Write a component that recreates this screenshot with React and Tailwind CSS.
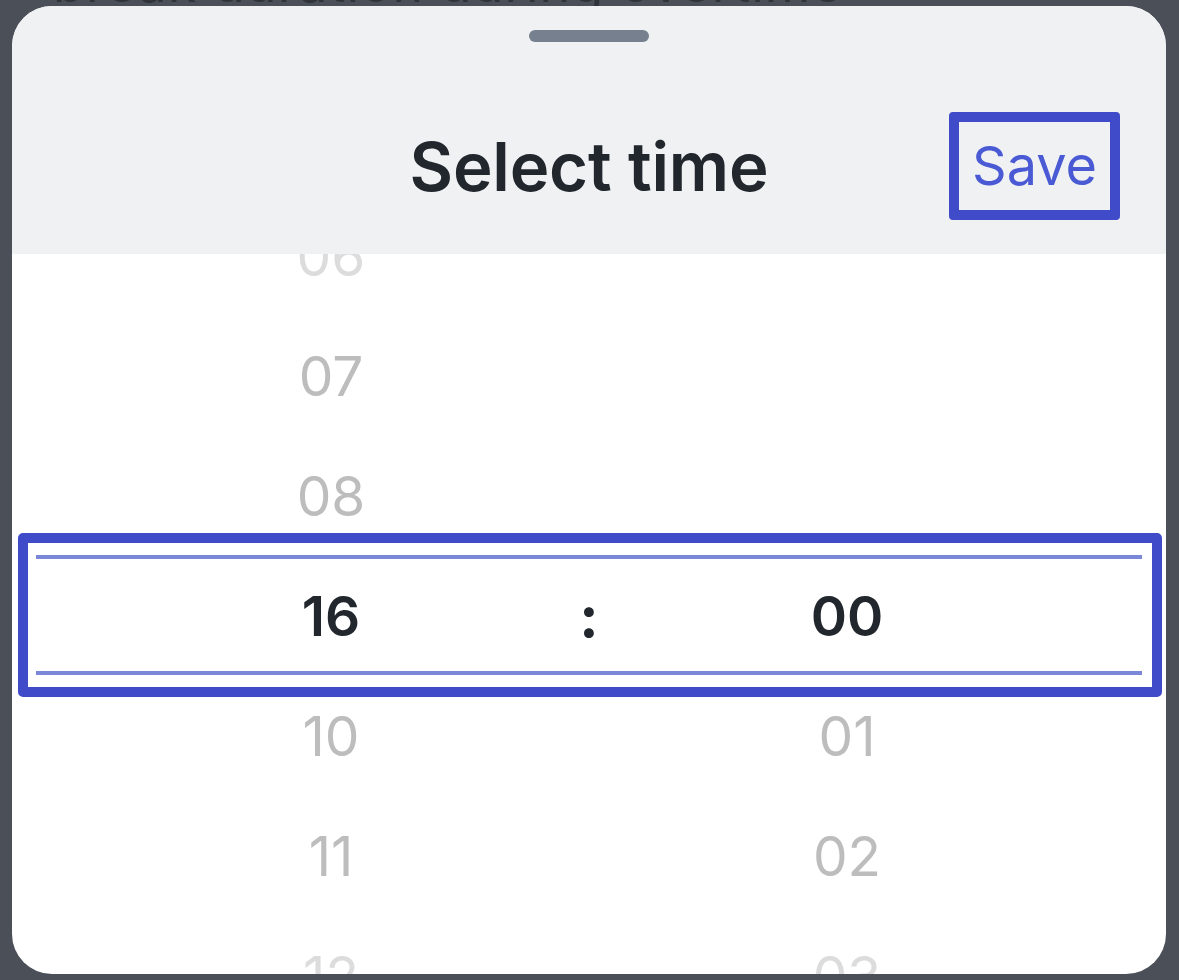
export default function App() {
  const font = { fontFamily: 'Inter, "Noto Sans", sans-serif' };
  const hours = [
    { t: "06", c: "text-[#dcdcdc]" },
    { t: "07", c: "text-[#bdbdbd]" },
    { t: "08", c: "text-[#bdbdbd]" },
    { t: "16", c: "text-[#22272e] font-semibold" },
    { t: "10", c: "text-[#bdbdbd]" },
    { t: "11", c: "text-[#bdbdbd]" },
    { t: "12", c: "text-[#dcdcdc]" },
  ];
  const minutes = [
    { t: "", c: "" },
    { t: "", c: "" },
    { t: "", c: "" },
    { t: "00", c: "text-[#22272e] font-semibold" },
    { t: "01", c: "text-[#bdbdbd]" },
    { t: "02", c: "text-[#bdbdbd]" },
    { t: "03", c: "text-[#dcdcdc]" },
  ];
  return (
    <div className="relative h-[980px] w-[1179px] overflow-hidden bg-[#4b5058]" style={font}>
      <div className="absolute left-[53px] top-[-46px] text-[52px] leading-[60px] text-[#30343a] tracking-[0.02em]">
        break duration during overtime
      </div>
      <div className="relative ml-[12px] mt-[6px] flex h-[968px] w-[1154px] flex-col overflow-hidden rounded-[40px] bg-white">
        <div className="flex h-[248px] shrink-0 flex-col items-center bg-[#f0f1f3]">
          <div className="mt-[24px] h-[12px] w-[120px] rounded-full bg-[#76808f]" />
          <div className="mt-[70px] grid h-[108px] w-full grid-cols-[1fr_auto_1fr] items-center">
            <div />
            <div className="text-[67px] font-semibold leading-none text-[#22272e] tracking-[-0.003em]">
              Select time
            </div>
            <div className="flex justify-end pr-[46px]">
              <div className="flex h-[108px] w-[171px] items-center justify-center rounded-[4px] border-[10px] border-[#3f4bc8]">
                <span className="text-[54px] leading-none text-[#4a5ad4]">Save</span>
              </div>
            </div>
          </div>
        </div>
        <div className="relative flex-1 overflow-hidden">
          <div className="mt-[-58px] flex justify-center">
            <div className="flex w-[258px] flex-col">
              {hours.map((h, i) => (
                <div key={i} className={`flex h-[120px] items-center justify-center text-[55px] leading-none ${h.c}`}>
                  {h.t}
                </div>
              ))}
            </div>
            <div className="flex w-[258px] flex-col">
              {hours.map((_, i) => (
                <div key={i} className="flex h-[120px] items-center justify-center text-[58px] font-bold leading-none text-[#22272e]">
                  {i === 3 ? ":" : ""}
                </div>
              ))}
            </div>
            <div className="flex w-[258px] flex-col">
              {minutes.map((m, i) => (
                <div key={i} className={`flex h-[120px] items-center justify-center text-[55px] leading-none ${m.c}`}>
                  {m.t}
                </div>
              ))}
            </div>
          </div>
          <div className="absolute left-[24px] right-[24px] top-[301px] h-[4px] bg-[#7b87d8]" />
          <div className="absolute left-[24px] right-[24px] top-[417px] h-[4px] bg-[#7b87d8]" />
          <div className="absolute left-[6px] right-[4px] top-[279px] h-[164px] rounded-[5px] border-[10px] border-[#3f4bc8]" />
        </div>
      </div>
    </div>
  );
}
